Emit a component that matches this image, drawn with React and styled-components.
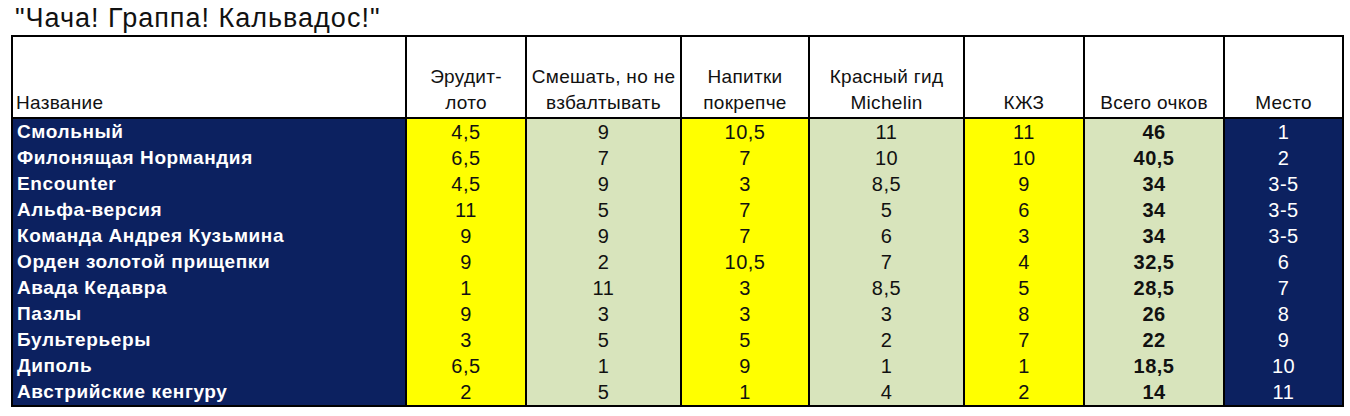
import React from "react";
import styled, { createGlobalStyle } from "styled-components";

const GlobalStyle = createGlobalStyle`
  body {
    margin: 0;
    background: #ffffff;
    font-family: "Liberation Sans", Arial, sans-serif;
  }
`;

const columns = [
  { title: ["Название"], width: 394, align: "left" },
  { title: ["Эрудит-", "лото"], width: 120, fill: "yellow" },
  { title: ["Смешать, но не", "взбалтывать"], width: 155, fill: "green" },
  { title: ["Напитки", "покрепче"], width: 128, fill: "yellow" },
  { title: ["Красный гид", "Michelin"], width: 155, fill: "green" },
  { title: ["КЖЗ"], width: 120, fill: "yellow" },
  { title: ["Всего очков"], width: 140, fill: "green", bold: true },
  { title: ["Место"], width: 119, fill: "navy" },
];

const rows = [
  ["Смольный", "4,5", "9", "10,5", "11", "11", "46", "1"],
  ["Филонящая Нормандия", "6,5", "7", "7", "10", "10", "40,5", "2"],
  ["Encounter", "4,5", "9", "3", "8,5", "9", "34", "3-5"],
  ["Альфа-версия", "11", "5", "7", "5", "6", "34", "3-5"],
  ["Команда Андрея Кузьмина", "9", "9", "7", "6", "3", "34", "3-5"],
  ["Орден золотой прищепки", "9", "2", "10,5", "7", "4", "32,5", "6"],
  ["Авада Кедавра", "1", "11", "3", "8,5", "5", "28,5", "7"],
  ["Пазлы", "9", "3", "3", "3", "8", "26", "8"],
  ["Бультерьеры", "3", "5", "5", "2", "7", "22", "9"],
  ["Диполь", "6,5", "1", "9", "1", "1", "18,5", "10"],
  ["Австрийские кенгуру", "2", "5", "1", "4", "2", "14", "11"],
];

const fills = {
  yellow: { bg: "#ffff00", fg: "#111111" },
  green: { bg: "#d8e4bc", fg: "#111111" },
  navy: { bg: "#0c2160", fg: "#ffffff" },
};

const Page = styled.div`
  padding: 5px 0 0 11px;
`;

const Title = styled.h1`
  margin: 0 0 4px 4px;
  font-size: 27px;
  font-weight: normal;
  letter-spacing: 1px;
  line-height: 26px;
  color: #111111;
`;

const Sheet = styled.table`
  border-collapse: collapse;
  table-layout: fixed;
  width: 1331px;
  border: 2px solid #000000;
`;

const HeadCell = styled.th`
  box-sizing: border-box;
  width: ${(p) => p.$width}px;
  height: 82px;
  padding: 0 3px 1px;
  border: 2px solid #000000;
  vertical-align: bottom;
  text-align: ${(p) => p.$align || "center"};
  font-size: 19px;
  font-weight: normal;
  letter-spacing: 0.3px;
  line-height: 26px;
  color: #111111;
  white-space: nowrap;
  overflow: hidden;
`;

const NameCell = styled.td`
  height: 26px;
  padding: 0 4px;
  background: #0c2160;
  color: #ffffff;
  font-size: 19px;
  font-weight: bold;
  letter-spacing: 0.6px;
  line-height: 26px;
  white-space: nowrap;
  border-right: 2px solid #000000;
`;

const ValueCell = styled.td`
  height: 26px;
  padding: 0;
  text-align: center;
  background: ${(p) => fills[p.$fill].bg};
  color: ${(p) => fills[p.$fill].fg};
  font-size: 20px;
  font-weight: ${(p) => (p.$bold ? "bold" : "normal")};
  letter-spacing: 0.5px;
  line-height: 26px;
  border-left: 2px solid #000000;
  border-right: 2px solid #000000;
`;

export default function App() {
  return (
    <Page>
      <GlobalStyle />
      <Title>"Чача! Граппа! Кальвадос!"</Title>
      <Sheet>
        <thead>
          <tr>
            {columns.map((c, i) => (
              <HeadCell key={i} $width={c.width} $align={c.align}>
                {c.title.map((line, j) => (
                  <div key={j}>{line}</div>
                ))}
              </HeadCell>
            ))}
          </tr>
        </thead>
        <tbody>
          {rows.map((r) => (
            <tr key={r[0]}>
              <NameCell>{r[0]}</NameCell>
              {r.slice(1).map((v, i) => (
                <ValueCell
                  key={i}
                  $fill={columns[i + 1].fill}
                  $bold={columns[i + 1].bold}
                >
                  {v}
                </ValueCell>
              ))}
            </tr>
          ))}
        </tbody>
      </Sheet>
    </Page>
  );
}
